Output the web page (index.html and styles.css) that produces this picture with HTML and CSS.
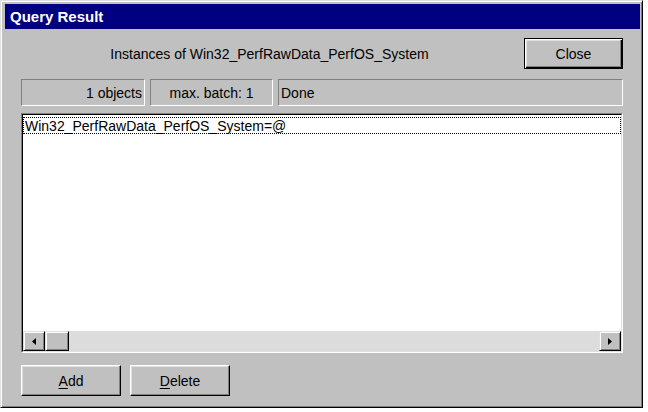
FILE: index.html
```html
<!DOCTYPE html>
<html>
<head>
<meta charset="utf-8">
<link rel="stylesheet" href="styles.css">
</head>
<body>
<div class="window">
  <div class="titlebar">Query Result</div>
  <div class="body">
    <div class="header">
      <div class="caption">Instances of Win32_PerfRawData_PerfOS_System</div>
      <div class="btn btn-default">Close</div>
    </div>
    <div class="status">
      <div class="panel p-count">1 objects</div>
      <div class="panel p-batch">max. batch: 1</div>
      <div class="panel p-state">Done</div>
    </div>
    <div class="list">
      <div class="list-inner">
        <div class="items">
          <div class="item">Win32_PerfRawData_PerfOS_System=@</div>
        </div>
        <div class="hscroll">
          <div class="sbtn"><svg width="4" height="7" viewBox="0 0 4 7"><path d="M4 0 L0 3.5 L4 7 Z" fill="#000"/></svg></div>
          <div class="thumb"></div>
          <div class="track"></div>
          <div class="sbtn"><svg width="4" height="7" viewBox="0 0 4 7"><path d="M0 0 L4 3.5 L0 7 Z" fill="#000"/></svg></div>
        </div>
      </div>
    </div>
    <div class="actions">
      <div class="btn"><u>A</u>dd</div>
      <div class="btn"><u>D</u>elete</div>
    </div>
  </div>
</div>
</body>
</html>
```

FILE: styles.css
```css
html, body {
  margin: 0;
  padding: 0;
  background: #ffffff;
}
body {
  font-family: "Liberation Sans", Arial, sans-serif;
  font-size: 14px;
  color: #000;
}
.window {
  box-sizing: border-box;
  width: 643px;
  height: 408px;
  background: #c0c0c0;
  border: 1px solid;
  border-color: #dfdfdf #000 #000 #dfdfdf;
  box-shadow: inset 1px 1px #fff, inset -1px -1px #808080;
  padding: 3px 2px 0 4px;
  display: flex;
  flex-direction: column;
}
.titlebar {
  height: 25px;
  background: #000080;
  color: #fff;
  font-weight: bold;
  font-size: 15px;
  line-height: 25px;
  padding-left: 5px;
}
.body {
  display: flex;
  flex-direction: column;
  padding: 0 17px 0 16px;
}
.header {
  display: flex;
  align-items: center;
  margin-top: 9px;
  height: 31px;
}
.caption {
  flex: 1;
  text-align: center;
  padding-right: 6px;
}
.btn {
  box-sizing: border-box;
  width: 100px;
  height: 31px;
  border: 1px solid;
  border-color: #fff #000 #000 #fff;
  box-shadow: inset -1px -1px #808080, inset 1px 1px #dfdfdf;
  display: flex;
  align-items: center;
  justify-content: center;
  background: #c0c0c0;
}
.btn-default {
  width: 99px;
  border-color: #000;
  box-shadow: inset 1px 1px #fff, inset -1px -1px #000, inset -2px -2px #808080, inset 2px 2px #dfdfdf;
}
.status {
  display: flex;
  gap: 5px;
  margin-top: 10px;
  height: 27px;
}
.panel {
  box-sizing: border-box;
  border: 1px solid;
  border-color: #808080 #fff #fff #808080;
  display: flex;
  align-items: center;
  padding: 0 2px;
}
.p-count {
  width: 124px;
  justify-content: flex-end;
}
.p-batch {
  width: 123px;
  justify-content: center;
}
.p-state {
  flex: 1;
}
.list {
  margin-top: 7px;
  height: 240px;
  box-sizing: border-box;
  border: 1px solid;
  border-color: #808080 #fff #fff #808080;
  display: flex;
}
.list-inner {
  flex: 1;
  border: 1px solid;
  border-color: #000 #dfdfdf #dfdfdf #000;
  background: #fff;
  display: flex;
  flex-direction: column;
}
.items {
  flex: 1;
  padding: 2px 0 0 0;
}
.item {
  height: 17px;
  line-height: 16px;
  box-sizing: border-box;
  border: 1px dotted #000;
  padding-left: 1px;
}
.hscroll {
  height: 20px;
  display: flex;
}
.sbtn {
  box-sizing: border-box;
  width: 22px;
  height: 20px;
  border: 1px solid;
  border-color: #dfdfdf #000 #000 #dfdfdf;
  box-shadow: inset 1px 1px #fff, inset -1px -1px #808080;
  background: #c0c0c0;
  display: flex;
  align-items: center;
  justify-content: center;
}
.thumb {
  box-sizing: border-box;
  width: 24px;
  height: 20px;
  border: 1px solid;
  border-color: #dfdfdf #000 #000 #dfdfdf;
  box-shadow: inset 1px 1px #fff, inset -1px -1px #808080;
  background: #c0c0c0;
}
.track {
  flex: 1;
  background: #dcdcdc;
}
.actions {
  display: flex;
  gap: 9px;
  margin-top: 12px;
}
u {
  text-decoration: underline;
  text-underline-offset: 2px;
}
```
